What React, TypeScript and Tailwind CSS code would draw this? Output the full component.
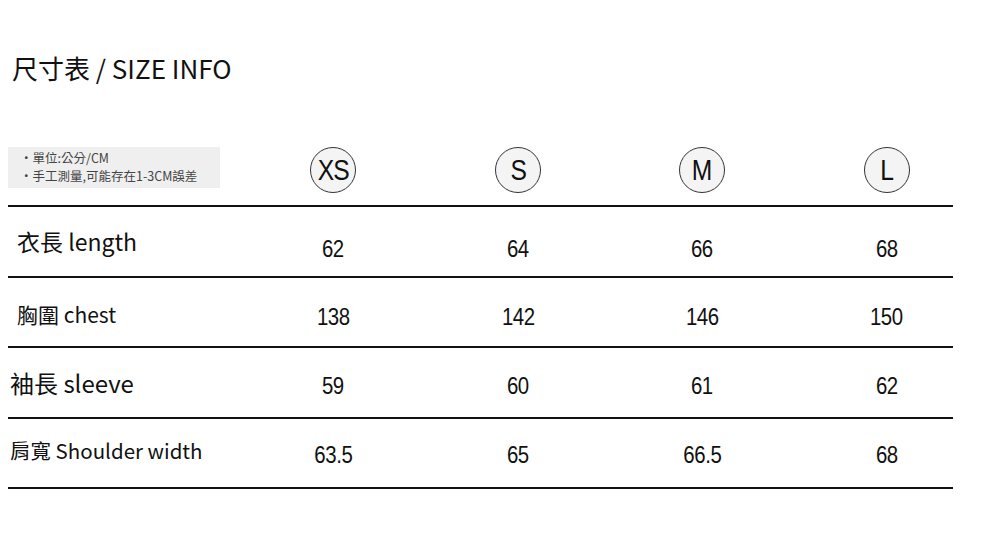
const cjk = '"Noto Sans CJK TC", "Noto Sans", sans-serif';
const num = '"Liberation Sans", Arial, sans-serif';

const sizes = ['XS', 'S', 'M', 'L'];

const rows = [
	{ label: '衣長 length', values: ['62', '64', '66', '68'], labelClass: 'pl-[9px] text-[23px]', labelPad: '', valuePad: 'pt-[15px]' },
	{ label: '胸圍 chest', values: ['138', '142', '146', '150'], labelClass: 'pl-[9px] text-[21px]', labelPad: 'pt-[5px]', valuePad: 'pt-[9px]' },
	{ label: '袖長 sleeve', values: ['59', '60', '61', '62'], labelClass: 'pl-[2px] text-[24px]', labelPad: '', valuePad: 'pt-[7px]' },
	{ label: '肩寬 Shoulder width', values: ['63.5', '65', '66.5', '68'], labelClass: 'pl-[2px] text-[20.5px]', labelPad: 'pb-[5px]', valuePad: 'pt-[4px]' }
];

const cellWidths = ['w-[186px]', 'w-[184px]', 'w-[184px]', 'w-[159px] pl-[26px]'];

function SizeBadge({ size }: { size: string }) {
	return (
		<div className="w-[46px] h-[46px] rounded-full border border-[#333] bg-[#f4f4f4] flex items-center justify-center">
			<span className="inline-block text-[29px] leading-none text-[#111] tracking-[-1px] scale-x-85" style={{ fontFamily: num }}>
				{size}
			</span>
		</div>
	);
}

export default function App() {
	return (
		<div className="w-[981px] h-[545px] bg-white overflow-hidden">
			<div className="pt-[50px] pl-[12px] h-[145px]">
				<h1 className="text-[26px] leading-[36px] text-[#111]" style={{ fontFamily: '"Noto Sans CJK SC", "Noto Sans", sans-serif' }}>
					尺寸表 / SIZE INFO
				</h1>
			</div>

			<div className="ml-[8px] w-[945px]">
				{/* header row */}
				<div className="flex items-start h-[62px] pt-[2px] border-b-2 border-[#111]">
					<div className="w-[232px]">
						<div
							className="w-[212px] h-[41px] bg-[#efefef] pl-[12px] pt-[2px] text-[12.5px] leading-[18px] text-[#444]"
							style={{ fontFamily: cjk }}>
							<div>・單位:公分/CM</div>
							<div>・手工測量,可能存在1-3CM誤差</div>
						</div>
					</div>
					{sizes.map((s, i) => (
						<div key={s} className={`${cellWidths[i]} flex justify-center`}>
							<SizeBadge size={s} />
						</div>
					))}
				</div>

				{rows.map((row, r) => (
					<div
						key={row.label}
						className={`flex items-center border-b-2 border-[#111] ${r % 2 === 0 ? 'h-[71px]' : 'h-[70px]'}`}>
						<div className={`w-[232px] ${row.labelClass} ${row.labelPad} text-[#111]`} style={{ fontFamily: cjk }}>
							{row.label}
						</div>
						{row.values.map((v, i) => (
							<div
								key={i}
								className={`${cellWidths[i]} ${row.valuePad} text-center leading-none`}>
								<span
									className="inline-block text-[24px] text-[#111] tracking-[-0.5px] scale-x-85"
									style={{ fontFamily: num }}>
									{v}
								</span>
							</div>
						))}
					</div>
				))}
			</div>
		</div>
	);
}
